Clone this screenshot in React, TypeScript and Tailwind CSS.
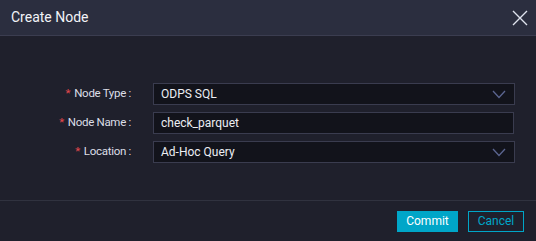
import React from "react";

const Chevron = () => (
  <svg width="14" height="9" viewBox="0 0 14 9" fill="none" className="shrink-0">
    <path d="M1 1l6 6.5L13 1" stroke="#5b6590" strokeWidth="1.3" />
  </svg>
);

const Label: React.FC<{ text: string }> = ({ text }) => (
  <div className="w-[133px] pr-[21px] text-right text-[11.5px] tracking-[-0.3px] text-[#dcdee7]">
    <span className="text-[#e5484d] mr-[4px]">*</span>
    {text} :
  </div>
);

const App: React.FC = () => {
  return (
    <div
      className="w-[536px] h-[241px] flex flex-col bg-[#1f202c]"
      style={{ fontFamily: "Roboto, 'Liberation Sans', sans-serif" }}
    >
      <div className="h-[35px] shrink-0 flex items-center justify-between pl-[11px] pr-[7px] bg-[#2b2e3f]">
        <span className="text-[14px] text-[#f2f3f7]">Create Node</span>
        <svg width="18" height="18" viewBox="0 0 18 18" fill="none">
          <path d="M2 2l14 14M16 2L2 16" stroke="#dfe3ee" strokeWidth="1.4" />
        </svg>
      </div>
      <div className="h-px bg-[#3b3d50] shrink-0" />
      <div className="flex-1 flex flex-col gap-[7px] pt-[47px] pl-[19px]">
        <div className="flex items-center">
          <Label text="Node Type" />
          <div className="w-[362px] h-[22px] ml-[1px] flex items-center justify-between pl-[7px] pr-[8px] bg-[#12131b] border border-[#3a3c4f] text-[12px] text-[#eceef3]">
            ODPS SQL
            <Chevron />
          </div>
        </div>
        <div className="flex items-center">
          <Label text="Node Name" />
          <div className="w-[361px] h-[22px] ml-[1px] flex items-center pl-[7px] bg-[#12131b] border border-[#3a3c4f] text-[12px] text-[#eceef3]">
            check_parquet
          </div>
        </div>
        <div className="flex items-center">
          <Label text="Location" />
          <div className="w-[362px] h-[22px] ml-[1px] flex items-center justify-between pl-[7px] pr-[8px] bg-[#12131b] border border-[#3a3c4f] text-[12px] text-[#eceef3]">
            Ad-Hoc Query
            <Chevron />
          </div>
        </div>
      </div>
      <div className="h-px bg-[#30323f] shrink-0" />
      <div className="h-[40px] shrink-0 flex items-center justify-end gap-[10px] pr-[12px]">
        <button className="w-[61px] h-[21px] bg-[#00a6c8] text-[12px] text-white">Commit</button>
        <button className="w-[56px] h-[21px] border border-[#00a6c8] text-[12px] text-[#00a6c8]">Cancel</button>
      </div>
    </div>
  );
};

export default App;
